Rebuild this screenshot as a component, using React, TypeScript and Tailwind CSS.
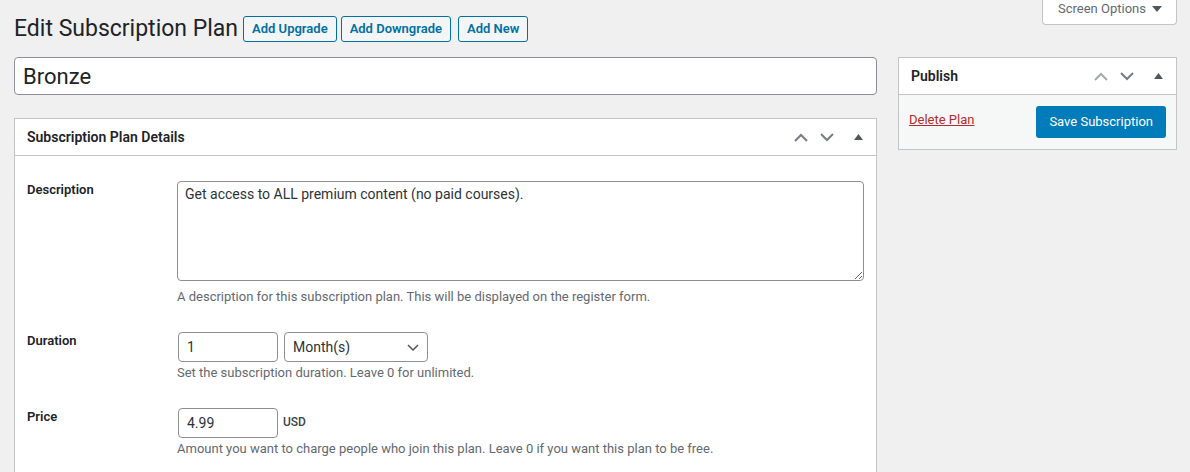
import React from "react";

function ChevUp({ color = "#787c82" }: { color?: string }) {
  return (
    <svg width="14" height="9" viewBox="0 0 14 9" fill="none">
      <polyline points="1,8 7,2 13,8" stroke={color} strokeWidth="2" />
    </svg>
  );
}
function ChevDown({ color = "#787c82" }: { color?: string }) {
  return (
    <svg width="14" height="9" viewBox="0 0 14 9" fill="none">
      <polyline points="1,1 7,7 13,1" stroke={color} strokeWidth="2" />
    </svg>
  );
}
function TriUp() {
  return (
    <svg width="9" height="6" viewBox="0 0 9 6">
      <polygon points="0,6 4.5,0 9,6" fill="#50575e" />
    </svg>
  );
}

function Handles({ upLight = false }: { upLight?: boolean }) {
  return (
    <div className="flex items-center h-full">
      <div className="w-[26px] h-[36px] flex items-center justify-center">
        <ChevUp color={upLight ? "#a7aaad" : "#787c82"} />
      </div>
      <div className="w-[26px] h-[36px] flex items-center justify-center">
        <ChevDown />
      </div>
      <div className="w-[36px] h-[36px] flex items-center justify-center">
        <TriUp />
      </div>
    </div>
  );
}

export default function App() {
  return (
    <div className="h-[472px] overflow-hidden bg-[#f0f0f1] font-['Roboto',sans-serif] text-[13px] text-[#3c434a] pl-[14px] pr-[13px]">
      {/* Top row */}
      <div className="flex items-start justify-between">
        <div className="mt-[14px] h-[30px] flex items-center">
          <h1 className="text-[23px] leading-[30px] text-[#1d2327] font-normal">Edit Subscription Plan</h1>
          <span className="ml-[5px] h-[26px] px-[8px] flex items-center border border-[#0071a1] rounded-[3px] bg-[#f3f5f6] text-[#0071a1] text-[13px] font-semibold">Add Upgrade</span>
          <span className="ml-[4px] h-[26px] px-[8px] flex items-center border border-[#0071a1] rounded-[3px] bg-[#f3f5f6] text-[#0071a1] text-[13px] font-semibold">Add Downgrade</span>
          <span className="ml-[7px] h-[26px] px-[8px] flex items-center border border-[#0071a1] rounded-[3px] bg-[#f3f5f6] text-[#0071a1] text-[13px] font-semibold">Add New</span>
        </div>
        <div className="w-[135px] h-[25px] bg-white border border-t-0 border-[#c3c4c7] rounded-b-[4px] flex items-start justify-between pl-[15px] pr-[14px] text-[#646970] text-[13px] leading-[18px]">
          <span>Screen Options</span>
          <svg width="10" height="6" viewBox="0 0 10 6" className="mt-[6px]">
            <polygon points="0,0 10,0 5,6" fill="#50575e" />
          </svg>
        </div>
      </div>

      {/* Columns */}
      <div className="flex gap-[21px] mt-[13px]">
        {/* Main */}
        <div className="flex-1 min-w-0">
          <input
            readOnly
            value="Bronze"
            className="w-full h-[38px] bg-white border border-[#8c8f94] rounded-[4px] px-[8px] text-[22px] text-[#1d2327] outline-none font-['Roboto',sans-serif]"
          />

          <div className="mt-[23px] bg-white border border-[#c3c4c7] h-[400px]">
            <div className="h-[37px] border-b border-[#c3c4c7] flex items-center justify-between pl-[12px]">
              <h2 className="text-[14px] font-semibold text-[#1d2327]">Subscription Plan Details</h2>
              <Handles />
            </div>
            <div className="px-[12px] pt-[25px] flex flex-col gap-[26px]">
              {/* Description */}
              <div className="flex">
                <div className="w-[150px] shrink-0 font-semibold text-[#1d2327] leading-[18px]">Description</div>
                <div className="flex-1 min-w-0">
                  <textarea
                    readOnly
                    defaultValue="Get access to ALL premium content (no paid courses)."
                    className="block w-full h-[100px] border border-[#8c8f94] rounded-[4px] px-[7px] py-[2px] text-[14px] leading-[20px] text-[#2c3338] outline-none font-['Roboto',sans-serif]"
                  />
                  <p className="mt-[7px] text-[#646970] leading-[18px]">A description for this subscription plan. This will be displayed on the register form.</p>
                </div>
              </div>
              {/* Duration */}
              <div className="flex">
                <div className="w-[150px] shrink-0 font-semibold text-[#1d2327] leading-[18px]">Duration</div>
                <div className="flex-1 min-w-0">
                  <div className="flex items-center">
                    <input
                      readOnly
                      value="1"
                      className="ml-[1px] w-[100px] h-[30px] border border-[#8c8f94] rounded-[4px] px-[8px] text-[14px] text-[#2c3338] outline-none font-['Roboto',sans-serif]"
                    />
                    <div className="ml-[6px] w-[144px] h-[30px] border border-[#8c8f94] rounded-[4px] pl-[8px] pr-[8px] flex items-center justify-between text-[14px] text-[#2c3338]">
                      <span>Month(s)</span>
                      <svg width="12" height="7" viewBox="0 0 12 7" fill="none">
                        <polyline points="1,1 6,6 11,1" stroke="#50575e" strokeWidth="1.5" />
                      </svg>
                    </div>
                  </div>
                  <p className="mt-[2px] text-[#646970] leading-[18px]">Set the subscription duration. Leave 0 for unlimited.</p>
                </div>
              </div>
              {/* Price */}
              <div className="flex">
                <div className="w-[150px] shrink-0 font-semibold text-[#1d2327] leading-[18px]">Price</div>
                <div className="flex-1 min-w-0">
                  <div className="flex items-center">
                    <input
                      readOnly
                      value="4.99"
                      className="ml-[1px] w-[100px] h-[30px] border border-[#8c8f94] rounded-[4px] px-[8px] text-[14px] text-[#2c3338] outline-none font-['Roboto',sans-serif]"
                    />
                    <span className="ml-[5px] -mt-[3px] text-[12px] font-medium text-[#3c434a]">USD</span>
                  </div>
                  <p className="mt-[2px] text-[#646970] leading-[18px]">Amount you want to charge people who join this plan. Leave 0 if you want this plan to be free.</p>
                </div>
              </div>
            </div>
          </div>
        </div>

        {/* Sidebar */}
        <div className="w-[279px] shrink-0">
          <div className="bg-white border border-[#c3c4c7]">
            <div className="h-[37px] border-b border-[#c3c4c7] flex items-center justify-between pl-[12px]">
              <h2 className="text-[14px] font-semibold text-[#1d2327]">Publish</h2>
              <Handles upLight />
            </div>
            <div className="bg-[#f6f7f7] px-[10px] pt-[11px] pb-[11px] flex items-center justify-between">
              <span className="text-[#b32d2e] underline text-[13px] -mt-[5px]">Delete Plan</span>
              <span className="h-[32px] px-[13px] flex items-center bg-[#007cba] rounded-[3px] text-white text-[13px]">Save Subscription</span>
            </div>
          </div>
        </div>
      </div>
    </div>
  );
}
